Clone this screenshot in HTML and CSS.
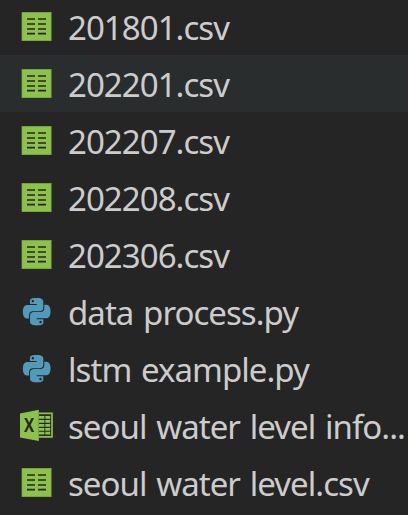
FILE: index.html
```
<!DOCTYPE html>
<html lang="en">
<head>
  <meta charset="UTF-8">
  <meta name="viewport" content="width=device-width, initial-scale=1.0">
  <title>Explorer</title>
  <link rel="stylesheet" href="styles.css">
</head>
<body>
  <ul class="files">
    <li class="file"><svg class="icon"><use href="#csv"/></svg><span class="name">201801.csv</span></li>
    <li class="file hovered"><svg class="icon"><use href="#csv"/></svg><span class="name">202201.csv</span></li>
    <li class="file"><svg class="icon"><use href="#csv"/></svg><span class="name">202207.csv</span></li>
    <li class="file"><svg class="icon"><use href="#csv"/></svg><span class="name">202208.csv</span></li>
    <li class="file"><svg class="icon"><use href="#csv"/></svg><span class="name">202306.csv</span></li>
    <li class="file"><svg class="icon"><use href="#python"/></svg><span class="name">data process.py</span></li>
    <li class="file"><svg class="icon"><use href="#python"/></svg><span class="name">lstm example.py</span></li>
    <li class="file">
      <svg class="icon" viewBox="0 0 36 36">
        <path d="M2 6.4L20.8 2.8v31.1L2 30.6z" fill="#8dc149"/>
        <path d="M20.8 6.4H34v23.4H20.8" fill="none" stroke="#8dc149" stroke-width="1.7"/>
        <path d="M21 10.3h5.4M21 14.4h5.4M21 18.4h5.4M21 22.4h5.4M21 26.2h5.4M27.3 10.3h4.9M27.3 14.4h4.9M27.3 18.4h4.9M27.3 22.4h4.9M27.3 26.2h4.9" stroke="#8dc149" stroke-width="2.7"/>
        <text class="mark" transform="translate(5.9 25) scale(.8 1)">X</text>
      </svg>
      <span class="name">seoul water level info...</span>
    </li>
    <li class="file"><svg class="icon"><use href="#csv"/></svg><span class="name">seoul water level.csv</span></li>
  </ul>

  <svg class="defs" width="0" height="0">
    <symbol id="csv" viewBox="0 0 36 36">
      <rect x="3.6" y="4" width="30" height="29" fill="#75a043"/>
      <rect x="4.2" y="5" width="28.6" height="27.2" fill="#8dc149"/>
      <path d="M9 11h8M20 11h8M9 16h8M20 16h8M9 21h8M20 21h8M9 25.6h8M20 25.6h8" stroke="#252525" stroke-width="1.7"/>
    </symbol>
    <symbol id="python" viewBox="0 0 36 36">
      <g transform="translate(4.9 4.9) scale(1.145)" fill="#519aba">
        <path d="M14.25.18l.9.2.73.26.59.3.45.32.34.34.25.34.16.33.1.3.04.26.02.2-.01.13V8.5l-.05.63-.13.55-.21.46-.26.38-.3.31-.33.25-.35.19-.35.14-.33.1-.3.07-.26.04-.21.02H8.77l-.69.05-.59.14-.5.22-.41.27-.33.32-.27.35-.2.36-.15.37-.1.35-.07.32-.04.27-.02.21v3.06H3.17l-.21-.03-.28-.07-.32-.12-.35-.18-.36-.26-.36-.36-.35-.46-.32-.59-.28-.73-.21-.88-.14-1.05-.05-1.23.06-1.22.16-1.04.24-.87.32-.71.36-.57.4-.44.42-.33.42-.24.4-.16.36-.1.32-.05.24-.01h.16l.06.01h8.16v-.83H6.18l-.01-2.75-.02-.37.05-.34.11-.31.17-.28.25-.26.31-.23.38-.2.44-.18.51-.15.58-.12.64-.1.71-.06.77-.04.84-.02 1.27.05zm-6.3 1.98l-.23.33-.08.41.08.41.23.34.33.22.41.09.41-.09.33-.22.23-.34.08-.41-.08-.41-.23-.33-.33-.22-.41-.09-.41.09z"/>
        <path d="M21.1 6.11l.28.06.32.12.35.18.36.27.36.35.35.47.32.59.28.73.21.88.14 1.04.05 1.23-.06 1.23-.16 1.04-.24.86-.32.71-.36.57-.4.45-.42.33-.42.24-.4.16-.36.09-.32.05-.24.02-.16-.01h-8.22v.82h5.84l.01 2.76.02.36-.05.34-.11.31-.17.29-.25.25-.31.24-.38.2-.44.17-.51.15-.58.13-.64.09-.71.07-.77.04-.84.01-1.27-.04-1.07-.14-.9-.2-.73-.25-.59-.3-.45-.33-.34-.34-.25-.34-.16-.33-.1-.3-.04-.25-.02-.2.01-.13v-5.34l.05-.64.13-.54.21-.46.26-.38.3-.32.33-.24.35-.2.35-.14.33-.1.3-.06.26-.04.21-.02.13-.01h5.84l.69-.05.59-.14.5-.21.41-.28.33-.32.27-.35.2-.36.15-.36.1-.35.07-.32.04-.28.02-.21V6.07h2.09l.14.01zm-6.47 14.25l-.23.33-.08.41.08.41.23.33.33.23.41.08.41-.08.33-.23.23-.33.08-.41-.08-.41-.23-.33-.33-.23-.41-.08-.41.08z"/>
      </g>
    </symbol>
  </svg>
</body>
</html>
```
FILE: styles.css
```
body {
  margin: 0;
  height: 515px;
  overflow: hidden;
  background: #252525;
  color: #cccccc;
  font-family: "Noto Sans", "Open Sans", sans-serif;
}
.defs {
  display: block;
}
.files {
  list-style: none;
  margin: -2px 0 0;
  padding: 0;
}
.file {
  display: flex;
  align-items: center;
  gap: 14px;
  height: 57px;
  padding-left: 18px;
}
.hovered {
  background: #2a2d2e;
}
.icon {
  flex: none;
  width: 36px;
  height: 36px;
  margin-bottom: 2px;
}
.name {
  padding-top: 2px;
  font-size: 33px;
  line-height: 55px;
  letter-spacing: -0.95px;
  word-spacing: 2px;
  white-space: pre;
}
.mark {
  font: bold 19px "Open Sans", sans-serif;
  fill: #252525;
}
```
